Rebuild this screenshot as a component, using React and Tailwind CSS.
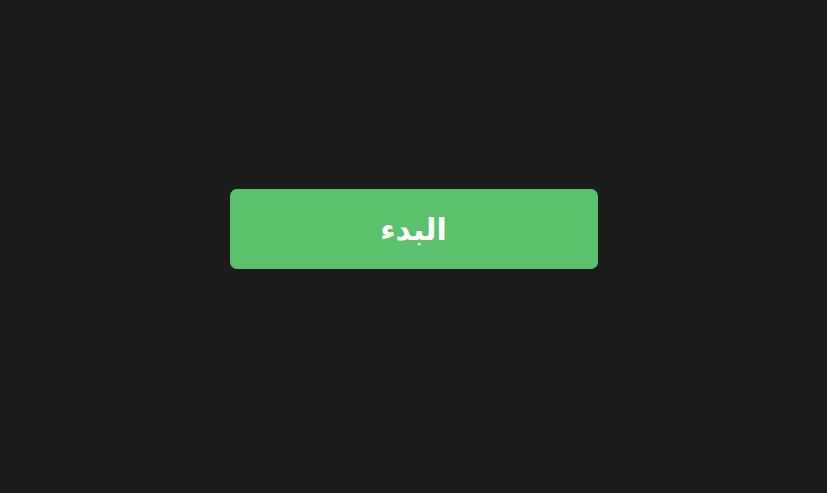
import React from "react";

const App = () => {
  return (
    <div className="min-h-screen bg-[#1c1c1c] flex items-center justify-center pb-[35px]">
      <button
        type="button"
        dir="rtl"
        className="w-[368px] h-[80px] rounded-[7px] bg-[#5cc16c] text-white text-[30px] font-bold flex items-center justify-center"
        style={{ fontFamily: '"DejaVu Sans", "Noto Sans", sans-serif' }}
      >
        البدء
      </button>
    </div>
  );
};

export default App;
